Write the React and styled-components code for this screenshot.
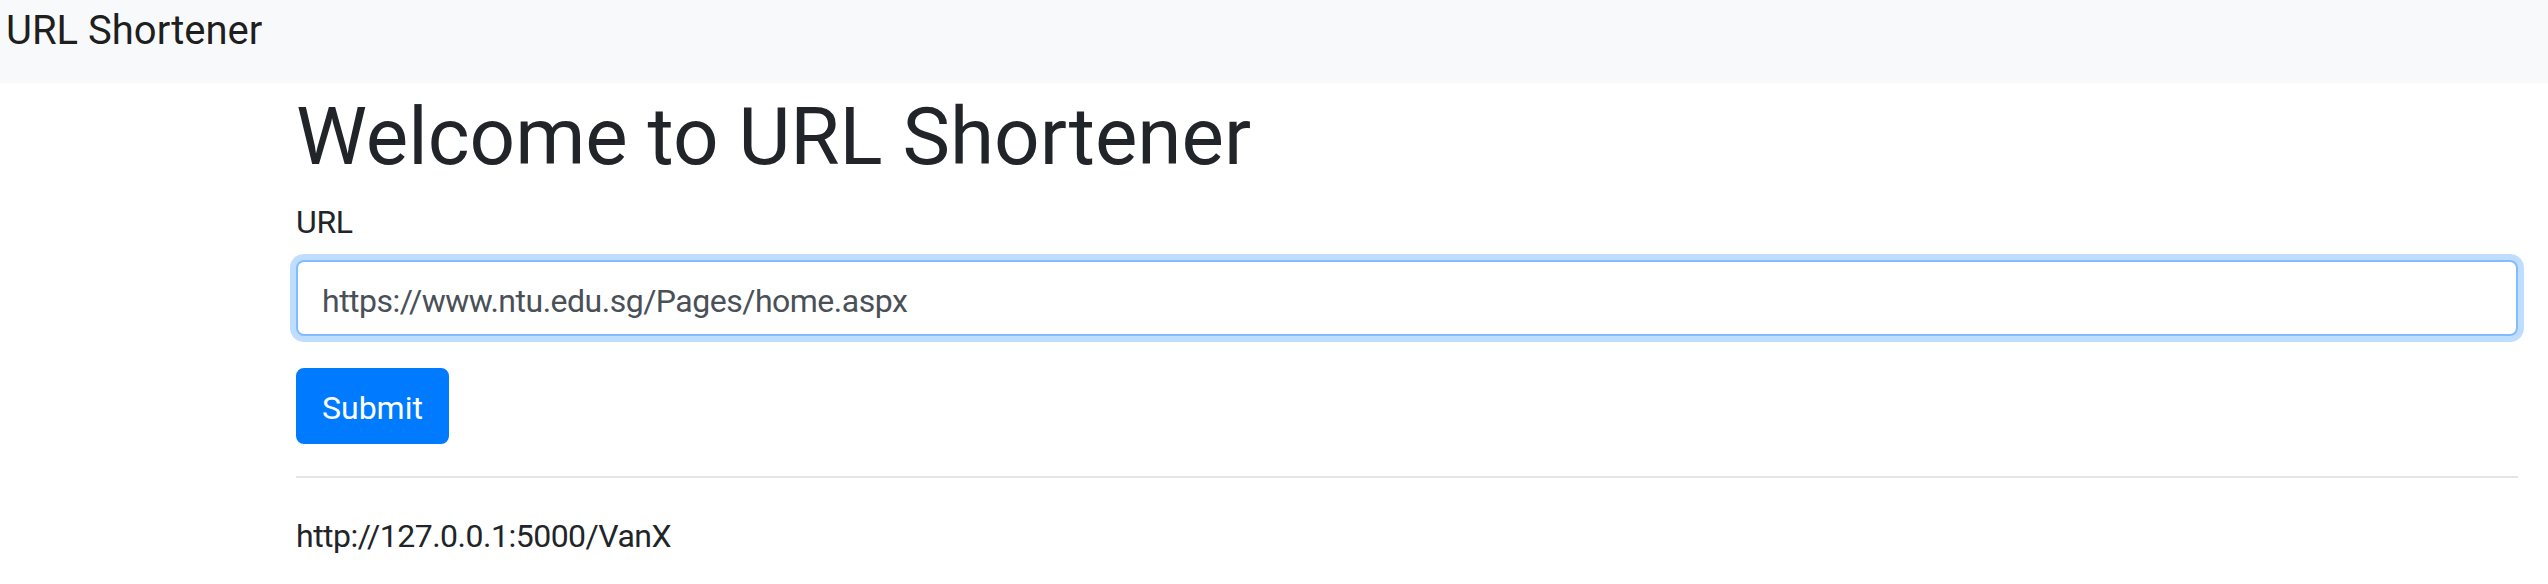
import React from 'react';
import styled, { createGlobalStyle } from 'styled-components';

const GlobalStyle = createGlobalStyle`
  *, *::before, *::after { box-sizing: border-box; }
  body {
    margin: 0;
    font-family: Roboto, "Liberation Sans", sans-serif;
    font-size: 32px;
    line-height: 1.5;
    color: #212529;
    background: #fff;
  }
`;

const Navbar = styled.nav`
  display: flex;
  align-items: flex-start;
  height: 83px;
  padding: 1px 0 0 6px;
  background-color: #f8f9fa;
`;

const Brand = styled.a`
  font-size: 40px;
  line-height: 60px;
  color: rgba(0, 0, 0, 0.9);
  text-decoration: none;
`;

const Main = styled.main`
  padding: 6px 30px 0 296px;
`;

const Title = styled.h1`
  margin: 0 0 13px;
  font-size: 80px;
  font-weight: 400;
  line-height: 1.2;
`;

const FormGroup = styled.div`
  margin-bottom: 32px;
`;

const Label = styled.label`
  display: block;
  margin-bottom: 14px;
  letter-spacing: -0.3px;
`;

const Input = styled.input`
  display: block;
  width: 100%;
  height: 76px;
  padding: 15px 24px 9px;
  font-family: inherit;
  font-size: 32px;
  line-height: 48px;
  letter-spacing: -0.5px;
  color: #495057;
  background-color: #fff;
  border: 2px solid #80bdff;
  border-radius: 8px;
  outline: 0;
  box-shadow: 0 0 0 6px rgba(0, 123, 255, 0.25);
`;

const Button = styled.button`
  display: inline-block;
  padding: 14px 24px 10px;
  font-family: inherit;
  font-size: 32px;
  line-height: 48px;
  color: #fff;
  background-color: #007bff;
  border: 2px solid #007bff;
  border-radius: 8px;
  cursor: pointer;
`;

const Divider = styled.hr`
  margin: 32px 0 0;
  border: 0;
  border-top: 2px solid rgba(0, 0, 0, 0.1);
`;

const Result = styled.p`
  margin: 34px 0 0;
  letter-spacing: -0.5px;
`;

export default function App() {
  return (
    <>
      <GlobalStyle />
      <Navbar>
        <Brand href="#">URL Shortener</Brand>
      </Navbar>
      <Main>
        <Title>Welcome to URL Shortener</Title>
        <form onSubmit={e => e.preventDefault()}>
          <FormGroup>
            <Label htmlFor="url">URL</Label>
            <Input id="url" type="text" defaultValue="https://www.ntu.edu.sg/Pages/home.aspx" />
          </FormGroup>
          <Button type="submit">Submit</Button>
        </form>
        <Divider />
        <Result>http://127.0.0.1:5000/VanX</Result>
      </Main>
    </>
  );
}
